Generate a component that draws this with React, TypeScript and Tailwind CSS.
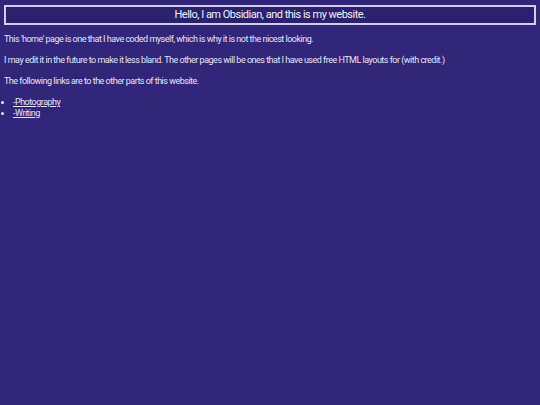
export default function App() {
  return (
    <div className="min-h-[405px] w-full bg-[#32267a] px-[4px] pt-[5px] text-[#e6e3f5] [font-family:Roboto,'DejaVu_Sans',sans-serif]">
      <div className="border-2 border-[#d4cdf2] bg-[#2c216f] py-[1px] text-center text-[11px] leading-[14px] tracking-[-0.5px] text-[#f1effa]">
        Hello, I am Obsidian, and this is my website.
      </div>
      <div className="mt-[9px] text-[9px] leading-[11px] tracking-[-0.5px]">
        <p>This 'home' page is one that I have coded myself, which is why it is not the nicest looking.</p>
        <p className="mt-[10px]">I may edit it in the future to make it less bland. The other pages will be ones that I have used free HTML layouts for (with credit.)</p>
        <p className="mt-[10px]">The following links are to the other parts of this website.</p>
        <ul className="mt-[10px] list-disc pl-[9px]">
          <li><a href="#" className="underline">-Photography</a></li>
          <li><a href="#" className="underline">-Writing</a></li>
        </ul>
      </div>
    </div>
  );
}
